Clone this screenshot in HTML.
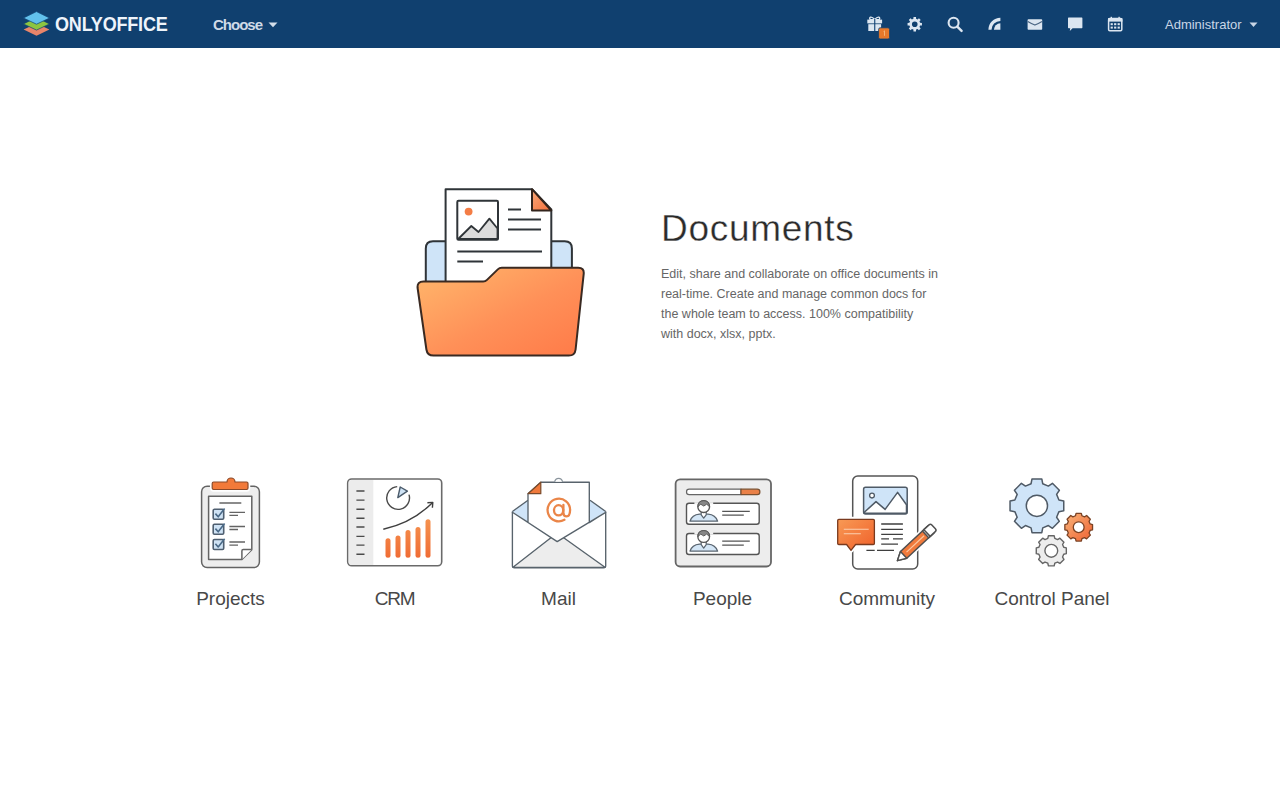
<!DOCTYPE html>
<html><head><meta charset="utf-8">
<style>
html,body{margin:0;padding:0;width:1280px;height:800px;overflow:hidden;background:#fff;font-family:"Liberation Sans",sans-serif;}
.hdr{position:absolute;left:0;top:0;width:1280px;height:48px;background:#10406f;}
.abs{position:absolute;white-space:nowrap;}
.logo-t{left:55px;top:13px;font-size:20px;font-weight:bold;color:#eef4fb;letter-spacing:-0.2px;transform:scaleX(0.9);transform-origin:0 0;}
.choose{left:213px;top:16px;font-size:15px;font-weight:bold;color:#cfdae7;letter-spacing:-1px;}
.admin{left:1165px;top:17px;font-size:13px;color:#c9d6e6;}
.title{left:661px;top:208px;font-size:37px;color:#2b2b2b;letter-spacing:0.7px;-webkit-text-stroke:0.35px #fff;}
.desc{left:661px;top:264px;font-size:12.5px;line-height:20px;color:#666;}
.lbl{top:588px;font-size:19px;color:#484848;width:164px;text-align:center;}
svg{position:absolute;left:0;top:0;}
</style></head><body>
<div class="hdr"></div>
<svg width="1280" height="800" viewBox="0 0 1280 800">
<defs>
  <linearGradient id="fold" x1="0" y1="0" x2="1" y2="1">
    <stop offset="0" stop-color="#ffb86c"/><stop offset="0.55" stop-color="#ff9058"/><stop offset="1" stop-color="#ff7a48"/>
  </linearGradient>
  <linearGradient id="barg" gradientUnits="userSpaceOnUse" x1="0" y1="519" x2="0" y2="558">
    <stop offset="0" stop-color="#f5924f"/><stop offset="1" stop-color="#f06c34"/>
  </linearGradient>
  <linearGradient id="fg2" x1="0" y1="0" x2="1" y2="1">
    <stop offset="0" stop-color="#f9a878"/><stop offset="1" stop-color="#f4703c"/>
  </linearGradient>
  <linearGradient id="bub" x1="0" y1="0" x2="1" y2="1">
    <stop offset="0" stop-color="#f89a55"/><stop offset="1" stop-color="#f0602a"/>
  </linearGradient>
  <linearGradient id="og" x1="0" y1="0" x2="1" y2="1">
    <stop offset="0" stop-color="#f9b47a"/><stop offset="1" stop-color="#ee6232"/>
  </linearGradient>
</defs>
<g id="logo">
  <path d="M23.6 29.6 L36.5 23.4 L49.4 29.6 L36.5 35.8 Z" fill="#e8856a"/>
  <path d="M23.4 23.9 L36.5 17.5 L49.6 23.9 L36.5 30.1 Z" fill="#8cc541" stroke="#0f4072" stroke-width="0.7"/>
  <path d="M23.4 18 L36.5 11.6 L49.6 18 L36.5 24.2 Z" fill="#62c1ec" stroke="#0f4072" stroke-width="0.7"/>
</g>
<path d="M268.5 22.5 L277.5 22.5 L273 27.2 Z" fill="#d3deea"/>
<path d="M1249.5 22.5 L1257.5 22.5 L1253.5 27 Z" fill="#c9d6e6"/>

<g fill="#dce6f1">
  <!-- gift -->
  <path d="M870.2 19.6 C868.6 17.2 871.2 15.6 874.7 19.4 C878.2 15.6 880.8 17.2 879.2 19.6 Z" fill="none" stroke="#dce6f1" stroke-width="1.4"/>
  <rect x="867.3" y="19.6" width="14.8" height="3.8"/>
  <rect x="868.3" y="24.2" width="12.8" height="6.8"/>
  <rect x="874.2" y="19" width="1.1" height="12.5" fill="#0f4072"/>
  <rect x="878.6" y="27.8" width="11" height="11.2" rx="1.6" fill="#e8792b" stroke="#0f4072" stroke-width="0.8"/>
  <path d="M883.6 31.4 L884.5 30.8 L884.5 35.8" fill="none" stroke="#f6c08a" stroke-width="0.8"/>
  <!-- gear -->
  <path fill-rule="evenodd" d="M913.42 18.86 L913.49 17.01 L916.01 17.01 L916.08 18.86 L917.59 19.49 L918.95 18.23 L920.72 20.00 L919.46 21.36 L920.09 22.87 L921.94 22.94 L921.94 25.46 L920.09 25.53 L919.46 27.04 L920.72 28.40 L918.95 30.17 L917.59 28.91 L916.08 29.54 L916.01 31.39 L913.49 31.39 L913.42 29.54 L911.91 28.91 L910.55 30.17 L908.78 28.40 L910.04 27.04 L909.41 25.53 L907.56 25.46 L907.56 22.94 L909.41 22.87 L910.04 21.36 L908.78 20.00 L910.55 18.23 L911.91 19.49 Z M917.55 24.20 A2.8 2.8 0 1 0 911.95 24.20 A2.8 2.8 0 1 0 917.55 24.20 Z"/>
  <!-- search -->
  <circle cx="953.6" cy="22.8" r="5" fill="none" stroke="#dce6f1" stroke-width="2.1"/>
  <path d="M957.3 26.6 L961.6 30.9" stroke="#dce6f1" stroke-width="2.4" stroke-linecap="round"/>
  <!-- feed -->
  <path d="M1000.4 29.8 L993.9 29.8 A6.5 6.5 0 0 1 1000.4 23.3 Z"/>
  <path d="M1000.4 20.9 A8.9 8.9 0 0 0 991.5 29.8 L988.4 29.8 A12 12 0 0 1 1000.4 17.8 Z"/>
  <!-- mail -->
  <rect x="1027.6" y="19.2" width="14.6" height="10.6" rx="0.8"/>
  <path d="M1027.8 21.4 Q1031.5 23.6 1034.9 25 Q1038.3 23.6 1042 21.4" fill="none" stroke="#4a6583" stroke-width="1.2"/>
  <!-- chat -->
  <path d="M1068.6 17.6 L1081.8 17.6 Q1082.4 17.6 1082.4 18.2 L1082.4 27.6 Q1082.4 28.2 1081.8 28.2 L1072.6 28.2 L1069.8 31 L1070.2 28.2 L1068.6 28.2 Q1068 28.2 1068 27.6 L1068 18.2 Q1068 17.6 1068.6 17.6 Z"/>
  <!-- calendar -->
  <rect x="1108.6" y="18.6" width="13.2" height="12.2" rx="1.2" fill="none" stroke="#dce6f1" stroke-width="1.5"/>
  <rect x="1108" y="18.2" width="14.4" height="3.4"/>
  <rect x="1110.6" y="16.8" width="1.4" height="2.6"/>
  <rect x="1118.4" y="16.8" width="1.4" height="2.6"/>
  <rect x="1110.6" y="23.2" width="2.2" height="2"/><rect x="1114.1" y="23.2" width="2.2" height="2"/><rect x="1117.6" y="23.2" width="2.2" height="2"/>
  <rect x="1110.6" y="26.6" width="2.2" height="2"/><rect x="1114.1" y="26.6" width="2.2" height="2"/><rect x="1117.6" y="26.6" width="2.2" height="2"/>
</g>


<g id="docs" stroke="#2f3438" stroke-width="2" stroke-linejoin="round">
  <path d="M425.8 300 L425.8 248.5 Q425.8 241.3 433 241.3 L564.7 241.3 Q571.9 241.3 571.9 248.5 L571.9 300 Z" fill="#cfe4f8"/>
  <path d="M445.6 300 L445.6 189.2 L532 189.2 L551.3 209.5 L551.3 300 Z" fill="#fff"/>
  <path d="M532 189.2 L532 210.5 L551.3 210.5 Z" fill="url(#fg2)" stroke="#33241c"/>
  <path d="M458.2 239 L471.3 226 L478.5 232 L489.4 218.6 L497.5 228.5 L497.5 239 Z" fill="#dcdcdc" stroke-width="1.8"/>
  <rect x="457.3" y="200.8" width="40.7" height="39" rx="1.2" fill="none"/>
  <circle cx="468.6" cy="211.6" r="3.9" fill="#f47d45" stroke="none"/>
  <path d="M508 209.5 L521 209.5 M508 219.5 L541 219.5 M508 229.5 L541 229.5 M457.3 251.5 L542 251.5 M457.3 261.5 L483 261.5" fill="none"/>
  <path d="M423.5 281.5 L483.2 281.5 Q485.4 281.5 487 279.9 L497.8 269.4 Q499.4 267.8 501.8 267.8 L578.2 267.8 Q584.3 267.8 583.7 273.8 L575.6 349.5 Q574.9 355.6 568.8 355.6 L433.5 355.6 Q427.3 355.6 426.4 349.5 L417.6 288 Q416.9 281.5 423.5 281.5 Z" fill="url(#fold)" stroke="#3a2a22"/>
</g>


<g id="projects" stroke="#646464" stroke-width="1.5" stroke-linejoin="round">
  <rect x="201.6" y="486.2" width="57.8" height="81.4" rx="5.5" fill="#eeeeee"/>
  <path d="M208.6 496.2 L251.8 496.2 L251.8 549.6 L241.9 559.5 L208.6 559.5 Z" fill="#fff"/>
  <path d="M251.8 549.6 L243.2 549.6 Q241.9 549.6 241.9 551 L241.9 559.5" fill="#fff"/>
  <path d="M213.6 482 L227 482 A4 4 0 0 1 235 482 L246.6 482 Q248 482 248 483.4 L248 488.1 Q248 489.5 246.6 489.5 L213.6 489.5 Q212.2 489.5 212.2 488.1 L212.2 483.4 Q212.2 482 213.6 482 Z" fill="#fff" stroke="#fff" stroke-width="4.5"/>
  <path d="M213.6 482 L227 482 A4 4 0 0 1 235 482 L246.6 482 Q248 482 248 483.4 L248 488.1 Q248 489.5 246.6 489.5 L213.6 489.5 Q212.2 489.5 212.2 488.1 L212.2 483.4 Q212.2 482 213.6 482 Z" fill="#f27a3a" stroke="#8a4a2a" stroke-width="1.2"/>
  <path d="M219.4 503 L241.3 503" stroke-width="1.5"/>
  <g fill="#cfe3f5" stroke="#4f5f70" stroke-width="1.6">
    <rect x="213.2" y="509.3" width="10.5" height="10" rx="1.2"/>
    <rect x="213.2" y="524.3" width="10.5" height="10" rx="1.2"/>
    <rect x="213.2" y="539.5" width="10.5" height="10" rx="1.2"/>
  </g>
  <path d="M215.4 513.6 L218.2 516.8 L224.6 508.6 M215.4 528.6 L218.2 531.8 L224.6 523.6 M215.4 543.8 L218.2 547 L224.6 538.8" fill="none" stroke="#4a6a88" stroke-width="1.6"/>
  <path d="M229.4 512.3 L245 512.3 M229.4 515.3 L238 515.3 M229.4 526.5 L245 526.5 M229.4 529.5 L238 529.5 M229.4 542 L245 542 M229.4 545.1 L238 545.1" stroke-width="1.3" fill="none"/>
</g>


<g id="crm" stroke-linejoin="round">
  <rect x="347.7" y="479" width="94" height="86.8" rx="4" fill="#fff" stroke="#6a6a6a" stroke-width="1.6"/>
  <path d="M348.6 483 Q348.6 479.9 351.7 479.9 L373.3 479.9 L373.3 564.9 L351.7 564.9 Q348.6 564.9 348.6 561.8 Z" fill="#ececec"/>
  <path d="M356.4 491 L364.5 491 M356.4 500.1 L364.5 500.1 M356.4 509.2 L364.5 509.2 M356.4 518.2 L364.5 518.2 M356.4 527 L364.5 527 M356.4 536.4 L364.5 536.4 M356.4 545.1 L364.5 545.1 M356.4 554.2 L364.5 554.2 " stroke="#4a4a4a" stroke-width="1.4"/>
  <path d="M409 494.6 A11.4 11.4 0 1 1 397.2 486.6" fill="none" stroke="#4a4a4a" stroke-width="1.4"/>
  <path d="M397.8 497.6 L400.2 487 L407.4 491.2 Z" fill="#cfe3f5" stroke="#4a5a6a" stroke-width="1.4"/>
  <path d="M383.3 529.2 Q412 523 432.4 502.8" fill="none" stroke="#3f3f3f" stroke-width="1.4"/>
  <path d="M427.4 502.8 L432.8 502.4 L432.4 507.8" fill="none" stroke="#3f3f3f" stroke-width="1.4"/>
  <g stroke="url(#barg)" stroke-width="5" stroke-linecap="round"><path d="M388 540.6999999999999 L388 555.2" /><path d="M398 537.9 L398 555.2" /><path d="M408 532.5 L408 555.2" /><path d="M418 529.4 L418 555.2" /><path d="M428 521.6999999999999 L428 555.2" /></g>
</g>


<g id="mail" stroke="#58636c" stroke-width="1.35" stroke-linejoin="round">
  <path d="M512.4 511.4 L512.4 565.8 Q512.4 567.8 514.4 567.8 L603.7 567.8 Q605.7 567.8 605.7 565.8 L605.7 511.4" fill="#fff"/>
  <path d="M513 567.3 L557 533 L605 567.3 Z" fill="#ededed"/>
  <path d="M512.4 511.5 L528 500.2 L590 500.2 L605.7 511.5 L557.2 541.6 Z" fill="#cfe4f8" stroke="none"/>
  <path d="M512.4 511.5 L528 500.2 M590 500.2 L605.7 511.5" fill="none"/>
  <path d="M528 522.4 L528 493.7 L540.8 482.2 L589.3 482.2 L589.3 522.6 L605.7 512.3 L557.2 541.6 L512.4 512.3 Z" fill="#fff"/>
  <path d="M528 493.7 L540.8 482.2 L540.8 493.7 Z" fill="#f07a3c" stroke="#7a4a2a" stroke-width="1.2"/>
  <path d="M554.6 481.8 Q555.4 478.4 558.6 478.4 Q561.8 478.4 562.6 481.8" fill="#fff" stroke-width="1.2" stroke="#8a949c"/>
  <g fill="none" stroke="#ea8548" stroke-width="2.3" stroke-linecap="round">
    <ellipse cx="558.6" cy="510.3" rx="4.6" ry="5.1"/>
    <path d="M563.4 504.8 L563.4 513.4 Q563.6 516.4 566.6 516.4 Q570 516.2 570.1 510 A11.25 11.3 0 1 0 564.4 519.8"/>
  </g>
</g>


<g id="people" stroke-linejoin="round">
  <rect x="675.6" y="479.3" width="95.4" height="87.2" rx="4.5" fill="#ededed" stroke="#666" stroke-width="1.8"/>
  <path d="M689.2 489.2 L741 489.2 L741 494.6 L689.2 494.6 Q686.5 494.6 686.5 491.9 Q686.5 489.2 689.2 489.2 Z" fill="#fff" stroke="#666" stroke-width="1.2"/>
  <path d="M741 489.2 L757.2 489.2 Q759.9 489.2 759.9 491.9 Q759.9 494.6 757.2 494.6 L741 494.6 Z" fill="#ea8148" stroke="#7a5030" stroke-width="1.2"/>
  <rect x="686.5" y="503.3" width="72.7" height="21" rx="2.5" fill="#fff" stroke="#555" stroke-width="1.4"/>
  <rect x="686.5" y="533.5" width="72.7" height="21" rx="2.5" fill="#fff" stroke="#555" stroke-width="1.4"/>
  
  <rect x="694.4" y="502.20000000000005" width="18.8" height="2.2" fill="#f2f2f2" stroke="none"/>
  <path d="M690 521.2 Q692 514.8000000000001 699.5 514.2 L708 514.2 Q715.6 514.8000000000001 717.6 521.2 Z" fill="#d4e6f6" stroke="#5a6570" stroke-width="1.3"/>
  <path d="M701.2 511.6 L701.2 514.8000000000001 L703.7 518.2 L706.2 514.8000000000001 L706.2 511.6" fill="#fff" stroke="#5a6570" stroke-width="1.2"/>
  <circle cx="703.7" cy="506.6" r="5.9" fill="#fff" stroke="#555" stroke-width="1.3"/>
  <path d="M698 506.8 Q697.8 500.70000000000005 703.7 500.70000000000005 Q709.6 500.70000000000005 709.4 506.8 Q708.2 505.0 706.6 504.20000000000005 Q705 505.40000000000003 703.7 506.0 Q702.4 505.40000000000003 700.8 504.20000000000005 Q699.2 505.0 698 506.8 Z" fill="#888" stroke="#5a5a5a" stroke-width="1"/>
  <path d="M722.2 511.3 L749.8 511.3 M722.2 515.2 L743.8 515.2" stroke="#555" stroke-width="1.2"/>

  
  <rect x="694.4" y="532.1" width="18.8" height="2.2" fill="#f2f2f2" stroke="none"/>
  <path d="M690 551.1 Q692 544.7 699.5 544.1 L708 544.1 Q715.6 544.7 717.6 551.1 Z" fill="#d4e6f6" stroke="#5a6570" stroke-width="1.3"/>
  <path d="M701.2 541.5 L701.2 544.7 L703.7 548.1 L706.2 544.7 L706.2 541.5" fill="#fff" stroke="#5a6570" stroke-width="1.2"/>
  <circle cx="703.7" cy="536.5" r="5.9" fill="#fff" stroke="#555" stroke-width="1.3"/>
  <path d="M698 536.7 Q697.8 530.6 703.7 530.6 Q709.6 530.6 709.4 536.7 Q708.2 534.9 706.6 534.1 Q705 535.3 703.7 535.9 Q702.4 535.3 700.8 534.1 Q699.2 534.9 698 536.7 Z" fill="#888" stroke="#5a5a5a" stroke-width="1"/>
  <path d="M722.2 541.2 L749.8 541.2 M722.2 545.1 L743.8 545.1" stroke="#555" stroke-width="1.2"/>

</g>


<g id="community" stroke-linejoin="round">
  <rect x="852.7" y="476" width="65" height="93" rx="5" fill="#fff" stroke="#555" stroke-width="1.5"/>
  <rect x="863.6" y="487.2" width="43.6" height="26.8" rx="2" fill="#cfe4f8" stroke="#4f5a66" stroke-width="1.5"/>
  <path d="M864.3 512.3 L876 501.6 L885.1 509.4 L897.6 492.4 L906.5 504.8 L906.5 513.3 L864.3 513.3 Z" fill="#fff" stroke="#4f5a66" stroke-width="1.5"/>
  <circle cx="872" cy="495.6" r="2.4" fill="#fff" stroke="#4f5a66" stroke-width="1.3"/>
  <path d="M881.2 524 L902.9 524 M881.2 529.3 L902.9 529.3 M881.2 534.3 L902.9 534.3 M881.2 538.9 L889 538.9 M893 538.9 L902.9 538.9 M881.2 544.2 L898 544.2 M866.4 550.3 L874.7 550.3 M877 550.3 L894 550.3" stroke="#3f3f3f" stroke-width="1.3"/>
  <path d="M838.8 519.3 L873.3 519.3 Q874.4 519.3 874.4 520.4 L874.4 543.4 Q874.4 544.5 873.3 544.5 L855.6 544.5 L851 550.3 L846.6 544.5 L838.8 544.5 Q837.7 544.5 837.7 543.4 L837.7 520.4 Q837.7 519.3 838.8 519.3 Z" fill="#fff" stroke="#fff" stroke-width="5"/>
  <path d="M838.8 519.3 L873.3 519.3 Q874.4 519.3 874.4 520.4 L874.4 543.4 Q874.4 544.5 873.3 544.5 L855.6 544.5 L851 550.3 L846.6 544.5 L838.8 544.5 Q837.7 544.5 837.7 543.4 L837.7 520.4 Q837.7 519.3 838.8 519.3 Z" fill="url(#bub)" stroke="#7a3a1e" stroke-width="1.3"/>
  <path d="M843.8 529.3 L868.7 529.3 M843.8 533.7 L860.8 533.7" stroke="#fbd0b0" stroke-width="1.1"/>
  <g transform="translate(914.6 544.6) rotate(47)">
    <path d="M-4.6 -24 Q-4.6 -26 -2.6 -26 L2.6 -26 Q4.6 -26 4.6 -24 L4.6 15 L0 23.5 L-4.6 15 Z" fill="#fff" stroke="#fff" stroke-width="4.5"/>
    <path d="M-4.6 -22 L4.6 -22 L4.6 15 L0 23.5 L-4.6 15 Z" fill="#f07a3c" stroke="#4f4f4f" stroke-width="1.5"/>
    <path d="M-4.6 -22 L4.6 -22 L4.6 -15 L-4.6 -15 Z" fill="#fff" stroke="#4f4f4f" stroke-width="1.5"/>
    <path d="M-4.6 -24 Q-4.6 -26 -2.6 -26 L2.6 -26 Q4.6 -26 4.6 -24 L4.6 -17 L-4.6 -17 Z" fill="#fff" stroke="#4f4f4f" stroke-width="1.5"/>
    <path d="M-4.6 15 L4.6 15 L0 23.5 Z" fill="#fff" stroke="#4f4f4f" stroke-width="1.5"/>
    <path d="M0 -13 L0 11" stroke="#fbc9a0" stroke-width="1.2"/>
  </g>
</g>


<g id="cpanel" stroke-linejoin="round">
  <path fill-rule="evenodd" d="M1031.06 483.76 L1032.00 478.94 L1041.80 478.94 L1042.74 483.76 L1048.35 486.08 L1052.42 483.34 L1059.36 490.28 L1056.62 494.35 L1058.94 499.96 L1063.76 500.90 L1063.76 510.70 L1058.94 511.64 L1056.62 517.25 L1059.36 521.32 L1052.42 528.26 L1048.35 525.52 L1042.74 527.84 L1041.80 532.66 L1032.00 532.66 L1031.06 527.84 L1025.45 525.52 L1021.38 528.26 L1014.44 521.32 L1017.18 517.25 L1014.86 511.64 L1010.04 510.70 L1010.04 500.90 L1014.86 499.96 L1017.18 494.35 L1014.44 490.28 L1021.38 483.34 L1025.45 486.08 Z M1047.50 505.80 A10.6 10.6 0 1 0 1026.30 505.80 A10.6 10.6 0 1 0 1047.50 505.80 Z" fill="#cfe4f8" stroke="#4f5a66" stroke-width="1.5"/>
  <path fill-rule="evenodd" d="M1075.47 515.75 L1076.06 513.35 L1081.34 513.35 L1081.93 515.75 L1084.51 516.82 L1086.63 515.54 L1090.36 519.27 L1089.08 521.39 L1090.15 523.97 L1092.55 524.56 L1092.55 529.84 L1090.15 530.43 L1089.08 533.01 L1090.36 535.13 L1086.63 538.86 L1084.51 537.58 L1081.93 538.65 L1081.34 541.05 L1076.06 541.05 L1075.47 538.65 L1072.89 537.58 L1070.77 538.86 L1067.04 535.13 L1068.32 533.01 L1067.25 530.43 L1064.85 529.84 L1064.85 524.56 L1067.25 523.97 L1068.32 521.39 L1067.04 519.27 L1070.77 515.54 L1072.89 516.82 Z M1084.10 527.20 A5.4 5.4 0 1 0 1073.30 527.20 A5.4 5.4 0 1 0 1084.10 527.20 Z" fill="url(#og)" stroke="#7a4224" stroke-width="1.3"/>
  <path fill-rule="evenodd" d="M1047.80 538.38 L1048.43 535.77 L1054.17 535.77 L1054.80 538.38 L1057.60 539.54 L1059.90 538.15 L1063.95 542.20 L1062.56 544.50 L1063.72 547.30 L1066.33 547.93 L1066.33 553.67 L1063.72 554.30 L1062.56 557.10 L1063.95 559.40 L1059.90 563.45 L1057.60 562.06 L1054.80 563.22 L1054.17 565.83 L1048.43 565.83 L1047.80 563.22 L1045.00 562.06 L1042.70 563.45 L1038.65 559.40 L1040.04 557.10 L1038.88 554.30 L1036.27 553.67 L1036.27 547.93 L1038.88 547.30 L1040.04 544.50 L1038.65 542.20 L1042.70 538.15 L1045.00 539.54 Z M1057.70 550.80 A6.4 6.4 0 1 0 1044.90 550.80 A6.4 6.4 0 1 0 1057.70 550.80 Z" fill="#ededed" stroke="#666" stroke-width="1.4"/>
</g>

</svg>
<div class="abs logo-t">ONLYOFFICE</div>
<div class="abs choose">Choose</div>
<div class="abs admin">Administrator</div>
<div class="abs title">Documents</div>
<div class="abs desc">Edit, share and collaborate on office documents in<br>real-time. Create and manage common docs for<br>the whole team to access. 100% compatibility<br>with docx, xlsx, pptx.</div>
<div class="abs lbl" style="left:148.5px">Projects</div>
<div class="abs lbl" style="left:313px;letter-spacing:-1.2px;text-indent:-1px">CRM</div>
<div class="abs lbl" style="left:476.5px">Mail</div>
<div class="abs lbl" style="left:640.5px">People</div>
<div class="abs lbl" style="left:805px">Community</div>
<div class="abs lbl" style="left:970px">Control Panel</div>
</body></html>
